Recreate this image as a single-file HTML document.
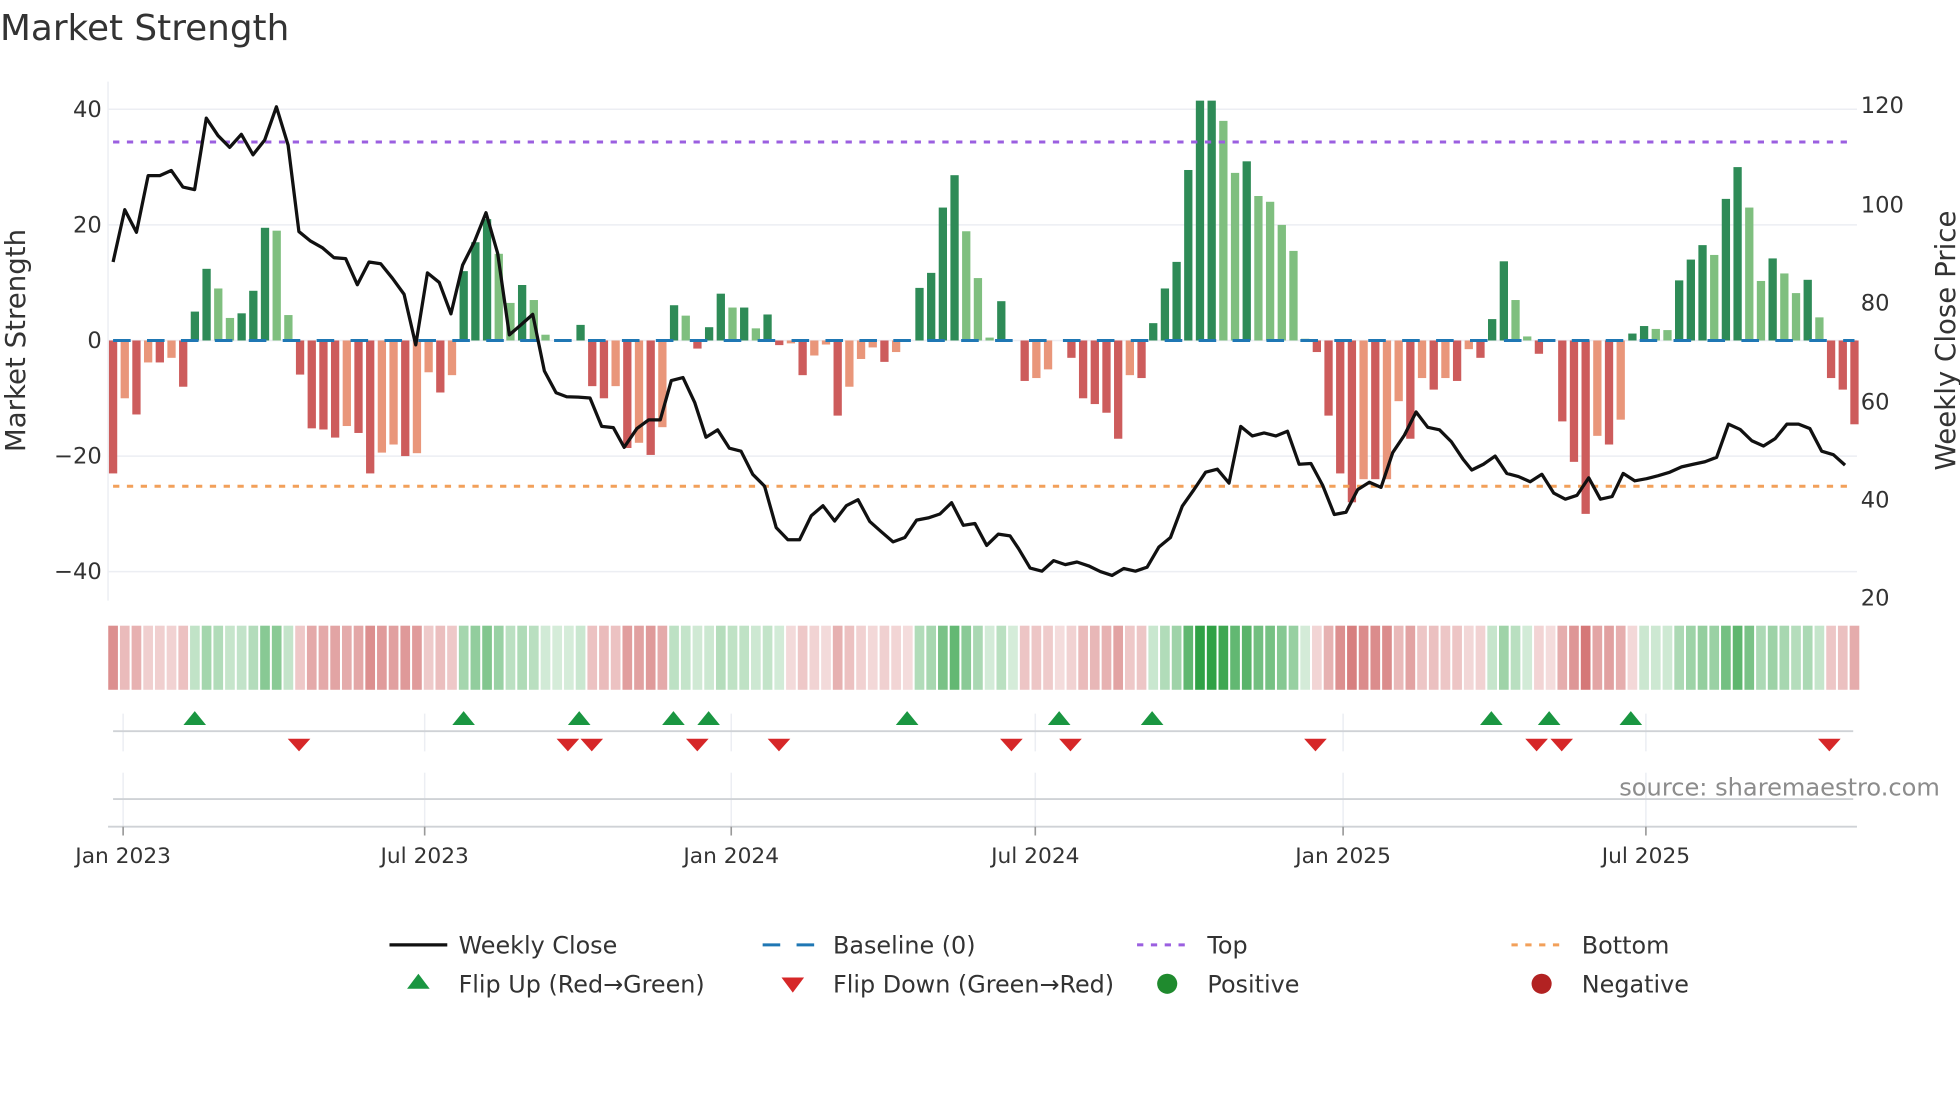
<!DOCTYPE html>
<html><head><meta charset="utf-8"><style>
html,body{margin:0;padding:0;background:#fff;width:1960px;height:1102px;overflow:hidden}
svg text{font-family:"DejaVu Sans","Liberation Sans",sans-serif;fill:#333}
</style></head><body>
<svg id="s" xmlns="http://www.w3.org/2000/svg" width="1960" height="1102" viewBox="0 0 1560 877.1" preserveAspectRatio="none">
<rect width="1560" height="878" fill="#fff"/>
<text x="0" y="32" font-size="28.5" fill="#333">Market Strength</text>
<g id="grid" stroke="#eceef3" stroke-width="1.2">
<line x1="86" y1="87" x2="1478" y2="87"/><line x1="86" y1="179" x2="1478" y2="179"/>
<line x1="86" y1="363" x2="1478" y2="363"/><line x1="86" y1="455" x2="1478" y2="455"/>
<line x1="86" y1="271" x2="1478" y2="271"/>
<line x1="86" y1="65" x2="86" y2="478"/>
</g>
<g font-size="18" text-anchor="end">
<text x="81" y="93">40</text><text x="81" y="185">20</text><text x="81" y="277">0</text>
<text x="81" y="369">−20</text><text x="81" y="461">−40</text>
</g>
<g font-size="18">
<text x="1481" y="90">120</text><text x="1481" y="169">100</text><text x="1481" y="247">80</text>
<text x="1481" y="326">60</text><text x="1481" y="404">40</text><text x="1481" y="482">20</text>
</g>
<text transform="translate(20,271) rotate(-90)" font-size="22" text-anchor="middle">Market Strength</text>
<text transform="translate(1556,271) rotate(-90)" font-size="22" text-anchor="middle">Weekly Close Price</text>
<g id="bars"></g>
<line x1="90" y1="271" x2="1476" y2="271" stroke="#1f77b4" stroke-width="2.4" stroke-dasharray="14 13"/>
<line x1="90" y1="113" x2="1476" y2="113" stroke="#9b5fe0" stroke-width="2.4" stroke-dasharray="5 6"/>
<line x1="90" y1="387" x2="1476" y2="387" stroke="#f2a05a" stroke-width="2.4" stroke-dasharray="5 6"/>
<polyline id="price" fill="none" stroke="#111" stroke-width="2.6" stroke-linejoin="round"/>
<g id="heat"></g>
<g stroke="#eceef3" stroke-width="1.2">
<line x1="98" y1="568" x2="98" y2="598"/><line x1="338" y1="568" x2="338" y2="598"/><line x1="582" y1="568" x2="582" y2="598"/>
<line x1="824" y1="568" x2="824" y2="598"/><line x1="1069" y1="568" x2="1069" y2="598"/><line x1="1310" y1="568" x2="1310" y2="598"/>
<line x1="98" y1="615" x2="98" y2="658"/><line x1="338" y1="615" x2="338" y2="658"/><line x1="582" y1="615" x2="582" y2="658"/>
<line x1="824" y1="615" x2="824" y2="658"/><line x1="1069" y1="615" x2="1069" y2="658"/><line x1="1310" y1="615" x2="1310" y2="658"/>
</g>
<line x1="90" y1="582" x2="1475" y2="582" stroke="#cfd2d6" stroke-width="1.5"/>
<line x1="90" y1="636" x2="1475" y2="636" stroke="#cfd2d6" stroke-width="1.5"/>
<line x1="86" y1="658" x2="1478" y2="658" stroke="#cfd2d6" stroke-width="1.5"/>
<g stroke="#999" stroke-width="1.3">
<line x1="98" y1="658" x2="98" y2="665"/><line x1="338" y1="658" x2="338" y2="665"/><line x1="582" y1="658" x2="582" y2="665"/>
<line x1="824" y1="658" x2="824" y2="665"/><line x1="1069" y1="658" x2="1069" y2="665"/><line x1="1310" y1="658" x2="1310" y2="665"/>
</g>
<g id="flips"></g>
<g font-size="17.3" text-anchor="middle">
<text x="98" y="687">Jan 2023</text><text x="338" y="687">Jul 2023</text><text x="582" y="687">Jan 2024</text>
<text x="824" y="687">Jul 2024</text><text x="1069" y="687">Jan 2025</text><text x="1310" y="687">Jul 2025</text>
</g>
<text x="1544" y="633" font-size="19.2" text-anchor="end" style="fill:#8c8c8c">source: sharemaestro.com</text>
<g font-size="19">
<line x1="310" y1="752" x2="356" y2="752" stroke="#111" stroke-width="2.6"/><text x="365" y="759">Weekly Close</text>
<line x1="607" y1="752" x2="651" y2="752" stroke="#1f77b4" stroke-width="2.4" stroke-dasharray="14 13"/><text x="663" y="759">Baseline (0)</text>
<line x1="905" y1="752" x2="949" y2="752" stroke="#9b5fe0" stroke-width="2.4" stroke-dasharray="5 6"/><text x="961" y="759">Top</text>
<line x1="1203" y1="752" x2="1247" y2="752" stroke="#f2a05a" stroke-width="2.4" stroke-dasharray="5 6"/><text x="1259" y="759">Bottom</text>
<polygon points="324,787 342,787 333,775" fill="#1a9641"/><text x="365" y="790">Flip Up (Red→Green)</text>
<polygon points="622,778 640,778 631,790" fill="#d62728"/><text x="663" y="790">Flip Down (Green→Red)</text>
<circle cx="929" cy="783" r="8" fill="#1f8a2e"/><text x="961" y="790">Positive</text>
<circle cx="1227" cy="783" r="8" fill="#b22222"/><text x="1259" y="790">Negative</text>
</g>
</svg>
<script>
(function(){
var NS="http://www.w3.org/2000/svg";
function el(t,a,p){var e=document.createElementNS(NS,t);for(var k in a)e.setAttribute(k,a[k]);p.appendChild(e);return e;}
var B=[[-23],[-10,1],[-12.8],[-3.8,1],[-3.8],[-3,1],[-8],[5],[12.4],[9,1],[3.9,1],[4.7],[8.6],[19.5],[19,1],[4.4,1],[-5.9],[-15.2],[-15.4],[-16.8],[-14.8,1],[-16],[-23],[-19.4,1],[-18,1],[-20],[-19.5,1],[-5.5,1],[-9],[-6,1],
[12],[17],[21],[15,1],[6.5,1],[9.6],[7,1],[1,1],[0],[0],[2.7],[-7.9],[-10],[-7.9,1],[-18.6],[-17.7,1],[-19.8],[-15,1],[6.1],[4.3,1],[-1.4],[2.3],[8.1],[5.7,1],[5.7],[2.1,1],[4.5],[-0.8],[-0.5,1],[-6],[-2.6,1],[-0.7,1],[-13],[-8,1],[-3.2,1],[-1.2,1],[-3.7],[-2,1],[0],[9.1],[11.7],[23],[28.6],[18.9,1],[10.8,1],[0.5,1],[6.8],[0],
[-7],[-6.5,1],[-5,1],[0],[-3],[-10],[-11],[-12.5],[-17],[-6,1],[-6.5],[3],[9],[13.6],[29.5],[41.5],[41.5],[38,1],[29,1],[31],[25,1],[24,1],[20,1],[15.5,1],[0.3,1],[-2],[-13],[-23],[-28],[-24,1],[-24],[-24,1],[-10.5,1],[-17],[-6.5,1],[-8.5],[-6.5,1],[-7],[-1.5,1],
[-3],[3.7],[13.7],[7,1],[0.7,1],[-2.3],[0],[-14],[-21],[-30],[-16.5,1],[-18],[-13.7,1],[1.2],[2.5],[2,1],[1.8,1],[10.4],[14],[16.5],[14.8,1],[24.5],[30],[23,1],[10.3,1],[14.2],[11.6,1],[8.2,1],[10.5],[4,1],[-6.5],[-8.5],[-14.5]];
var bars=document.getElementById('bars'),heat=document.getElementById('heat');
var n=B.length,step=(1476-90)/(n-1);
for(var i=0;i<n;i++){
 var v=B[i][0],L=B[i][1],cx=90+i*step,h=Math.abs(v)*4.6;
 var col=v>=0?(L?'#7fbf7f':'#2e8b57'):(L?'#e9967a':'#cd5c5c');
 if(h>0.3) el('rect',{x:cx-3.3,y:v>=0?271-h:271,width:6.6,height:h,fill:col},bars);
 var t=Math.min(1,Math.abs(v)/42),a=0.2+0.8*t,c;
 var pv=v; if(Math.abs(v)<1.5){var j=i>0?B[i-1][0]:v;pv=j;}
 if(pv>=0){c=[46,160,67];}else{c=[200,80,80];}
 var r=Math.round(255-a*(255-c[0])),g=Math.round(255-a*(255-c[1])),b=Math.round(255-a*(255-c[2]));
 el('rect',{x:cx-step/2+0.8,y:498,width:step-1.6,height:51,fill:'rgb('+r+','+g+','+b+')'},heat);
}
var P=[];
function add(x0,arr){for(var k=0;k<arr.length;k+=2)P.push((x0+arr[k]/3.76).toFixed(1)+','+arr[k+1]);}
function cy(z){return (271+(z-598)*0.347).toFixed(1);}
function conv(x0,a){var o=[];for(var k=0;k<a.length;k+=2){o.push(a[k]);o.push(cy(a[k+1]));}add(x0,o);}
conv(83.6,[24,418,59,298,94,350,129,220,164,220,198,208,233,246,268,252,303,88,338,128,373,155,408,125,443,172,478,138,513,62,548,150,580,348,615,370,650,385,685,408,720,410,755,470,790,418,825,422,860,455,895,492,930,608,965,443,1000,465,1035,537,1070,425,1105,372,1140,305,1175,398,1210,585,1245,562,1280,538,1315,668,1350,718]);
conv(441.7,[35,727,70,728,105,730,140,795,175,798,207,843,245,800,280,780,315,780,348,690,383,683,418,740,452,820,487,803,522,845,557,852,592,905,627,932,662,1027,697,1055,732,1055,767,1000,802,977,837,1012,872,977,907,963,942,1013,977,1037,1012,1060,1047,1050,1082,1010,1117,1005,1152,996,1187,970,1222,1022,1257,1018,1292,1068,1327,1042,1362,1046]);
conv(800,[40,1075,75,1120,110,1127,145,1103,180,1112,215,1106,250,1115,285,1128,320,1137,355,1121,390,1127,425,1118,460,1072,495,1050,530,978,565,940,600,900,635,893,670,925,705,795,740,817,775,810,810,817,845,806,880,882,915,880,950,930,985,997,1020,992,1055,940,1090,923,1125,935,1160,855,1195,815,1230,762,1265,797,1300,803,1335,830,1370,870]);
conv(1158.1,[50,895,85,882,120,863,155,903,190,910,225,922,260,905,295,948,330,962,365,953,400,913,435,962,470,956,503,903,538,920,573,915,608,908,643,900,678,888,713,882,748,876,783,866,818,790,853,802,888,828,923,840,958,823,993,790,1028,790,1062,800,1097,852,1132,860,1167,884]);
document.getElementById('price').setAttribute('points',P.join(' '));
var f=document.getElementById('flips');
[155,369,461,536,564,722,843,917,1187,1233,1298].forEach(function(x){el('polygon',{points:(x-9)+',577 '+(x+9)+',577 '+x+',566',fill:'#1a9641'},f);});
[238,452,471,555,620,805,852,1047,1223,1243,1456].forEach(function(x){el('polygon',{points:(x-9)+',588 '+(x+9)+',588 '+x+',598',fill:'#d62728'},f);});
})();
</script>
</body></html>
